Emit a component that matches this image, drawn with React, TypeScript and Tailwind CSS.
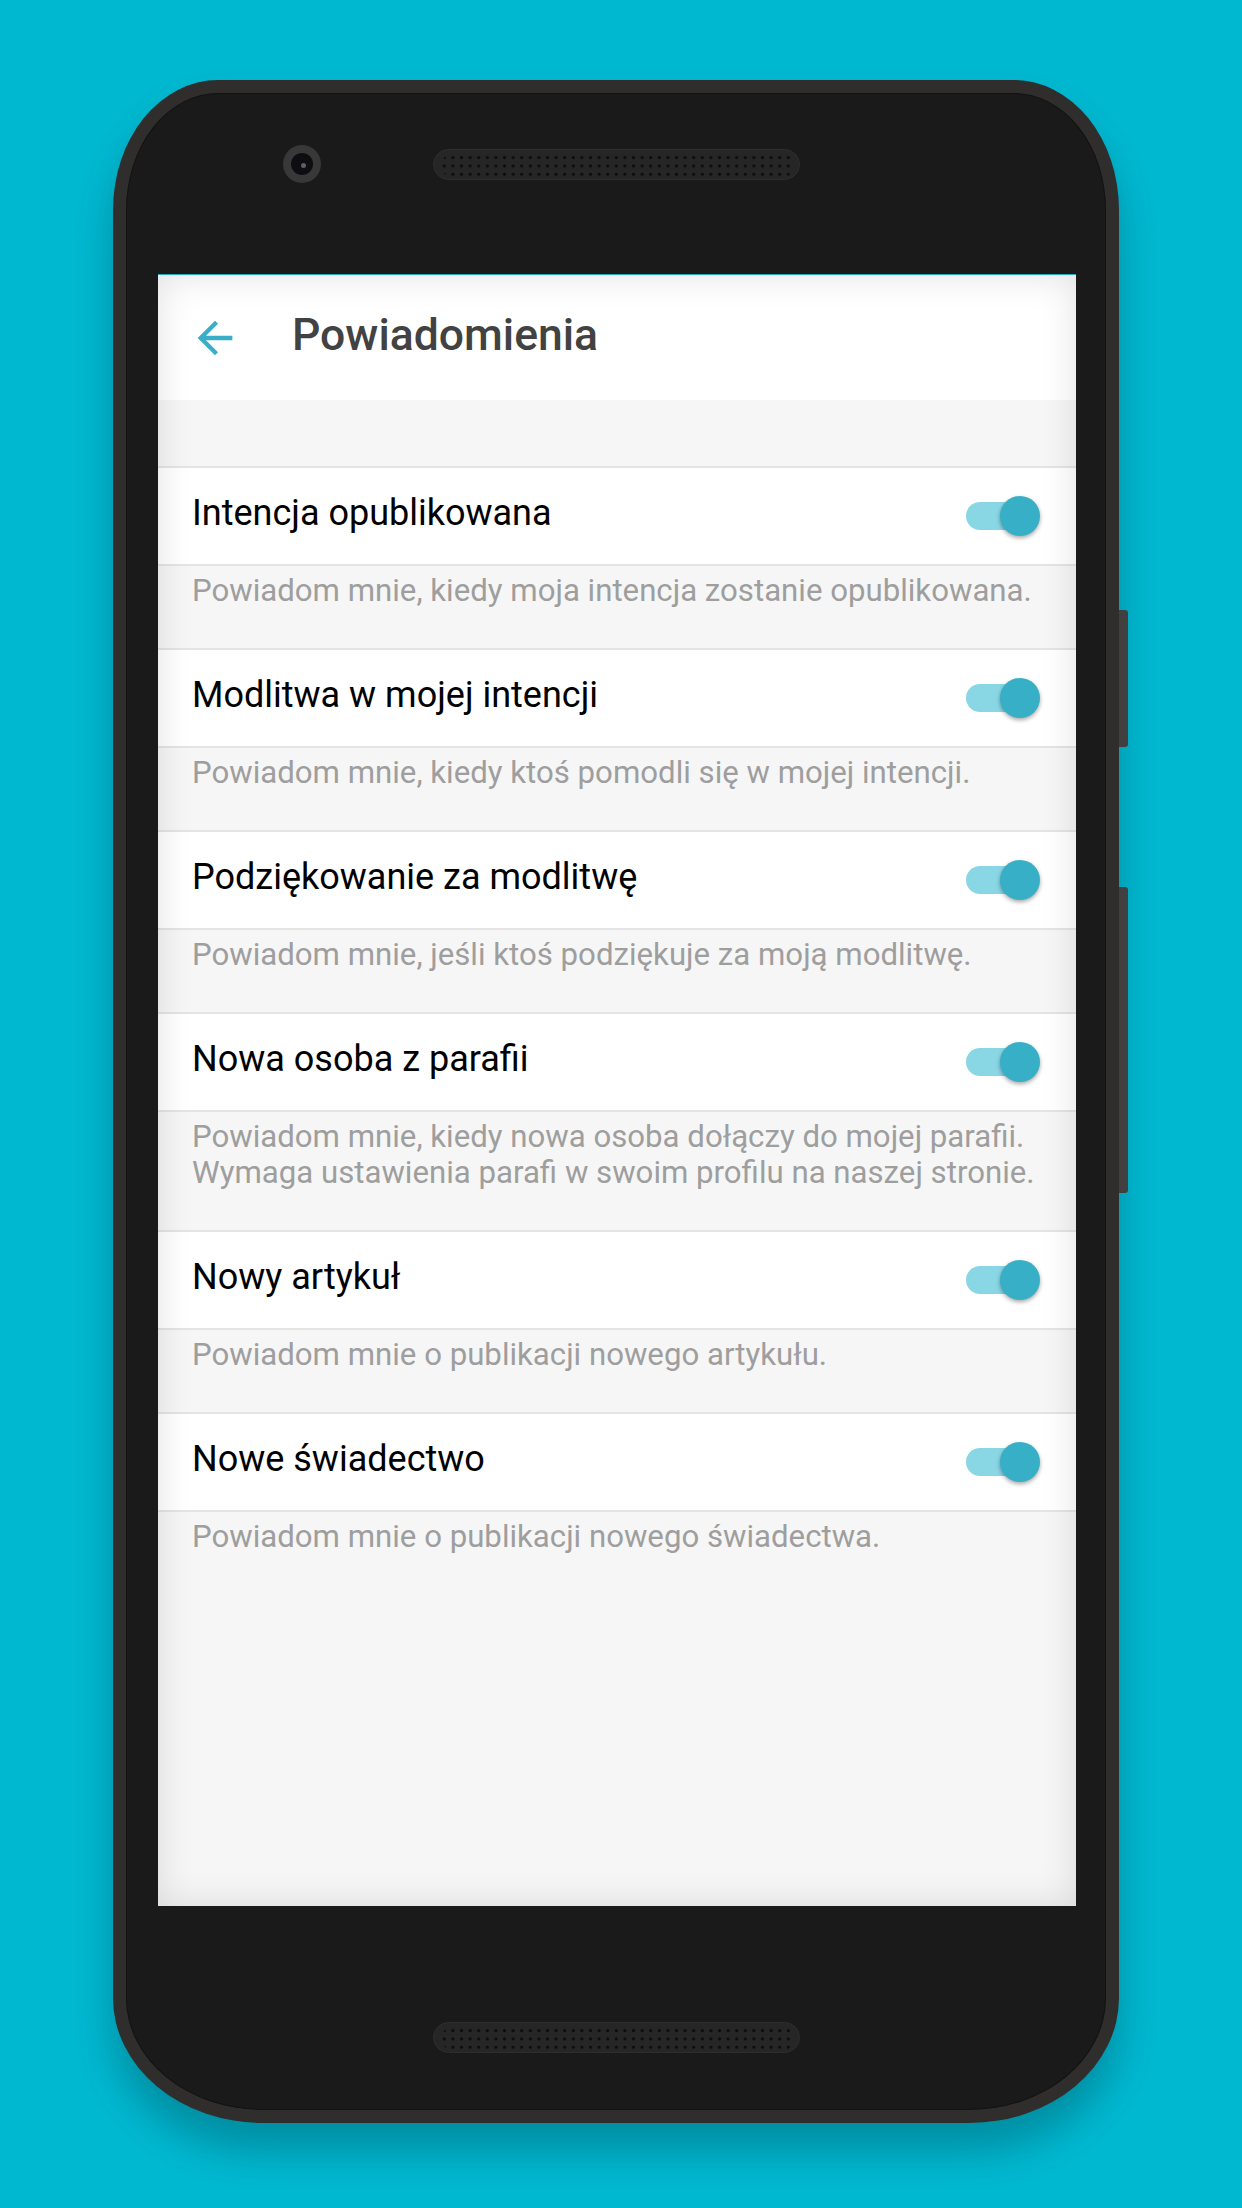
import React from "react";

const items: { title: string; desc: React.ReactNode }[] = [
  { title: "Intencja opublikowana", desc: "Powiadom mnie, kiedy moja intencja zostanie opublikowana." },
  { title: "Modlitwa w mojej intencji", desc: "Powiadom mnie, kiedy ktoś pomodli się w mojej intencji." },
  { title: "Podziękowanie za modlitwę", desc: "Powiadom mnie, jeśli ktoś podziękuje za moją modlitwę." },
  {
    title: "Nowa osoba z parafii",
    desc: (
      <>
        Powiadom mnie, kiedy nowa osoba dołączy do mojej parafii.
        <br />
        Wymaga ustawienia parafi w swoim profilu na naszej stronie.
      </>
    ),
  },
  { title: "Nowy artykuł", desc: "Powiadom mnie o publikacji nowego artykułu." },
  { title: "Nowe świadectwo", desc: "Powiadom mnie o publikacji nowego świadectwa." },
];

function Speaker({ id }: { id: string }) {
  return (
    <div className="w-[367px] h-[31px] rounded-full bg-[#262626] border border-[#2e2e2e] overflow-hidden">
      <svg width="367" height="31" viewBox="0 0 367 31">
        <defs>
          <pattern id={id} x="6" y="3.5" width="8.6" height="8.3" patternUnits="userSpaceOnUse">
            <circle cx="4.3" cy="4.15" r="1.6" fill="#0c0c0c" />
          </pattern>
        </defs>
        <rect x="8" y="2" width="351" height="27" rx="13" fill={`url(#${id})`} />
      </svg>
    </div>
  );
}

function Toggle() {
  return (
    <div className="relative w-[68px] h-[28px] rounded-full bg-[#89d7e5]">
      <div className="absolute right-[-6px] top-[-6px] w-[40px] h-[40px] rounded-full bg-[#37afc6] shadow-[0_2px_4px_rgba(0,0,0,0.35)]" />
    </div>
  );
}

export default function App() {
  return (
    <div
      className="w-[1242px] h-[2208px] bg-[#00b9d1] overflow-hidden pt-[80px] pl-[113px]"
      style={{ fontFamily: "Roboto, 'Noto Sans', sans-serif" }}
    >
      <div className="relative w-[1006px] h-[2043px] bg-[#2f2e2c] p-[13px] rounded-tl-[105px_130px] rounded-tr-[105px_130px] rounded-bl-[150px_125px] rounded-br-[150px_125px] shadow-[0_28px_40px_rgba(0,60,75,0.35)]">
        {/* side buttons */}
        <div className="absolute right-[-9px] top-[530px] w-[9px] h-[137px] rounded-r-[3px] bg-[#423f41]" />
        <div className="absolute right-[-9px] top-[807px] w-[9px] h-[306px] rounded-r-[3px] bg-[#423f41]" />

        <div className="w-full h-full bg-[#1a1a1a] border border-[#121212] flex flex-col rounded-tl-[92px_117px] rounded-tr-[92px_117px] rounded-bl-[137px_112px] rounded-br-[137px_112px]">
          {/* top bezel */}
          <div className="h-[180px] shrink-0">
            <div className="h-[140px] flex items-center pl-[156px]">
              <div className="w-[38px] h-[38px] rounded-full bg-[#383838] flex items-center justify-center">
                <div className="w-[22px] h-[22px] rounded-full bg-[#0d0d12] flex items-center justify-center">
                  <div className="w-[5px] h-[5px] rounded-full bg-[#6a5a5c] translate-x-[1px] translate-y-[1px]" />
                </div>
              </div>
              <div className="ml-[112px]">
                <Speaker id="spk-top" />
              </div>
            </div>
          </div>

          {/* screen */}
          <div className="relative ml-[31px] w-[918px] h-[1632px] shrink-0 bg-[#f6f6f6] border-t border-[#2aa9c1] overflow-hidden flex flex-col">
            <div className="h-[125px] shrink-0 bg-white flex items-center pl-[31px] pb-[4px]">
              <svg width="52" height="52" viewBox="0 0 24 24" className="mt-[4px]">
                <path d="M20 11H7.83l5.59-5.59L12 4l-8 8 8 8 1.41-1.41L7.83 13H20v-2z" fill="#3aaec8" />
              </svg>
              <div className="ml-[51px] text-[44.5px] font-medium text-[#424242] leading-none">Powiadomienia</div>
            </div>
            <div className="h-[66px] shrink-0" />
            {items.map((it, i) => (
              <div key={i} className="flex flex-col">
                <div className="h-[100px] bg-white border-y-2 border-[#e4e4e4] flex items-center justify-between pl-[34px] pr-[42px]">
                  <span className="text-[36px] text-black leading-none mb-[6px]">{it.title}</span>
                  <Toggle />
                </div>
                <div className="pt-[7px] pb-[39px] pl-[34px] text-[31.2px] leading-[36px] text-[#9e9e9e]">{it.desc}</div>
              </div>
            ))}
            <div className="pointer-events-none absolute inset-0 shadow-[inset_0_0_36px_rgba(0,0,0,0.12)]" />
          </div>

          {/* bottom bezel */}
          <div className="flex-1 pt-[116px] pl-[306px]">
            <Speaker id="spk-bot" />
          </div>
        </div>
      </div>
    </div>
  );
}
